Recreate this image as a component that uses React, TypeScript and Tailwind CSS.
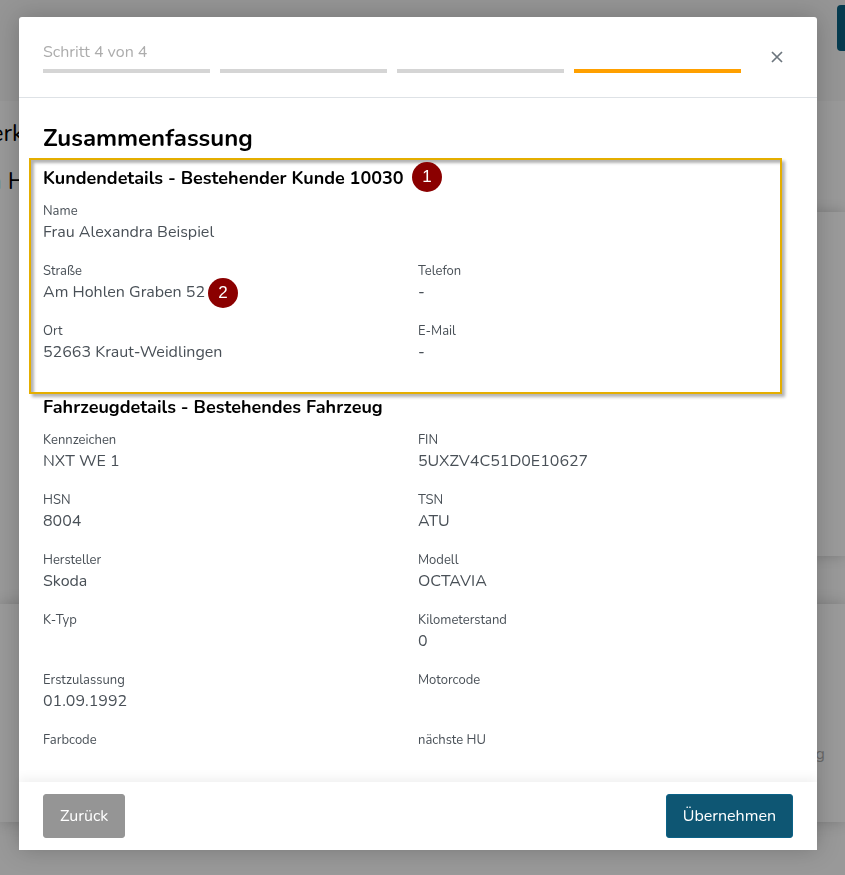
type Detail = { label: string; value: string };

const customer: Detail[] = [
  { label: "Straße", value: "Am Hohlen Graben 52" },
  { label: "Telefon", value: "-" },
  { label: "Ort", value: "52663 Kraut-Weidlingen" },
  { label: "E-Mail", value: "-" },
];

const vehicle: Detail[] = [
  { label: "Kennzeichen", value: "NXT WE 1" },
  { label: "FIN", value: "5UXZV4C51D0E10627" },
  { label: "HSN", value: "8004" },
  { label: "TSN", value: "ATU" },
  { label: "Hersteller", value: "Skoda" },
  { label: "Modell", value: "OCTAVIA" },
  { label: "K-Typ", value: "" },
  { label: "Kilometerstand", value: "0" },
  { label: "Erstzulassung", value: "01.09.1992" },
  { label: "Motorcode", value: "" },
  { label: "Farbcode", value: "" },
  { label: "nächste HU", value: "" },
];

function Entry({ label, value }: Detail) {
  return (
    <div>
      <dt className="text-[13px] leading-5">{label}</dt>
      <dd className="h-[22px] text-base leading-[22px]">{value}</dd>
    </div>
  );
}

function Entries({ items }: { items: Detail[] }) {
  return (
    <dl className="grid grid-cols-2 gap-y-[18px]">
      {items.map((item) => (
        <Entry key={item.label} {...item} />
      ))}
    </dl>
  );
}

function Marker({ number, place }: { number: number; place: string }) {
  return (
    <span
      className={`absolute flex size-[30px] items-center justify-center rounded-full bg-[#8b0000] font-['Liberation_Sans',sans-serif] text-[17px] font-normal text-white ${place}`}
    >
      {number}
    </span>
  );
}

function PageBehind() {
  return (
    <div aria-hidden="true" className="flex min-h-screen flex-col overflow-hidden bg-[#999999]">
      <div className="flex h-[101px] justify-end bg-[#959595] pt-[5px]">
        <div className="h-[46px] w-2 rounded-l-sm bg-[#063b4f]" />
      </div>
      <div className="flex h-[111px] flex-col gap-4 pt-4 text-2xl leading-8 text-black">
        <div className="flex w-6 justify-end whitespace-nowrap">erk</div>
        <div className="flex w-[26px] justify-end gap-1.5 whitespace-nowrap">
          <span className="text-[#2b6f93]">n</span>
          <span>H</span>
        </div>
      </div>
      <div className="flex justify-end">
        <div className="h-[344px] w-9 bg-[#9a9a9a] shadow-[0_0_14px_rgba(0,0,0,0.2)]" />
      </div>
      <div className="mt-12 flex h-[218px] items-end justify-end bg-[#9a9a9a] pr-5 pb-14 shadow-[0_0_14px_rgba(0,0,0,0.2)]">
        <span className="text-base leading-6 text-[#6b6b6b]">g</span>
      </div>
    </div>
  );
}

export default function App() {
  return (
    <div className="font-[Nunito,'Noto_Sans',sans-serif]">
      <PageBehind />
      <div className="fixed inset-0 overflow-hidden pt-[17px] pr-7 pb-[25px] pl-[19px]">
        <div
          role="dialog"
          aria-modal="true"
          aria-labelledby="dialog-title"
          className="rounded-t-[3px] bg-white text-[#495057] shadow-[0_0_24px_rgba(0,0,0,0.22)]"
        >
          <header className="flex items-center gap-5 border-b border-[#dee2e6] px-6 pt-6 pb-6">
            <div className="flex-1">
              <p className="text-base leading-[22px] text-[#adadad]">Schritt 4 von 4</p>
              <div className="mt-1.5 flex gap-2.5">
                <div className="h-1 flex-1 bg-[#d5d5d5]" />
                <div className="h-1 flex-1 bg-[#d5d5d5]" />
                <div className="h-1 flex-1 bg-[#d5d5d5]" />
                <div className="h-1 flex-1 bg-[#ffa000]" />
              </div>
            </div>
            <button type="button" aria-label="Schließen" className="flex size-8 items-center justify-center">
              <svg viewBox="0 0 12 12" className="size-3" fill="none" stroke="#6c757d" strokeWidth="1.7">
                <path d="M1 1L11 11M11 1L1 11" />
              </svg>
            </button>
          </header>

          <main className="px-6 pt-6 pb-2.5">
            <h1 id="dialog-title" className="text-2xl leading-8 font-bold text-black">
              Zusammenfassung
            </h1>

            <section className="relative mt-3 pb-[18px]">
              <div className="absolute -top-2 right-[11px] -bottom-[13px] -left-3.5 border-2 border-[#e4ae00] shadow-[3px_3px_3px_rgba(0,0,0,0.3),inset_3px_3px_3px_rgba(0,0,0,0.3)]" />
              <h2 className="mb-[11px] text-lg leading-6 font-bold text-black">
                Kundendetails - Bestehender Kunde 10030
              </h2>
              <div className="flex flex-col gap-[18px]">
                <dl>
                  <Entry label="Name" value="Frau Alexandra Beispiel" />
                </dl>
                <Entries items={customer} />
              </div>
              <Marker number={1} place="-top-1 left-[369px]" />
              <Marker number={2} place="top-28 left-[165px]" />
            </section>

            <section className="mt-3.5">
              <h2 className="mb-[11px] text-lg leading-6 font-bold text-black">
                Fahrzeugdetails - Bestehendes Fahrzeug
              </h2>
              <Entries items={vehicle} />
            </section>
          </main>

          <footer className="flex justify-between bg-white px-6 py-3 shadow-[0_-4px_10px_rgba(0,0,0,0.06)]">
            <button
              type="button"
              className="h-11 rounded-[3px] border border-[#959595] bg-[#959595] px-4 text-base text-white"
            >
              Zurück
            </button>
            <button
              type="button"
              className="h-11 rounded-[3px] border border-[#0b6287] bg-[#0e5673] px-4 text-base text-white"
            >
              Übernehmen
            </button>
          </footer>
        </div>
      </div>
    </div>
  );
}
